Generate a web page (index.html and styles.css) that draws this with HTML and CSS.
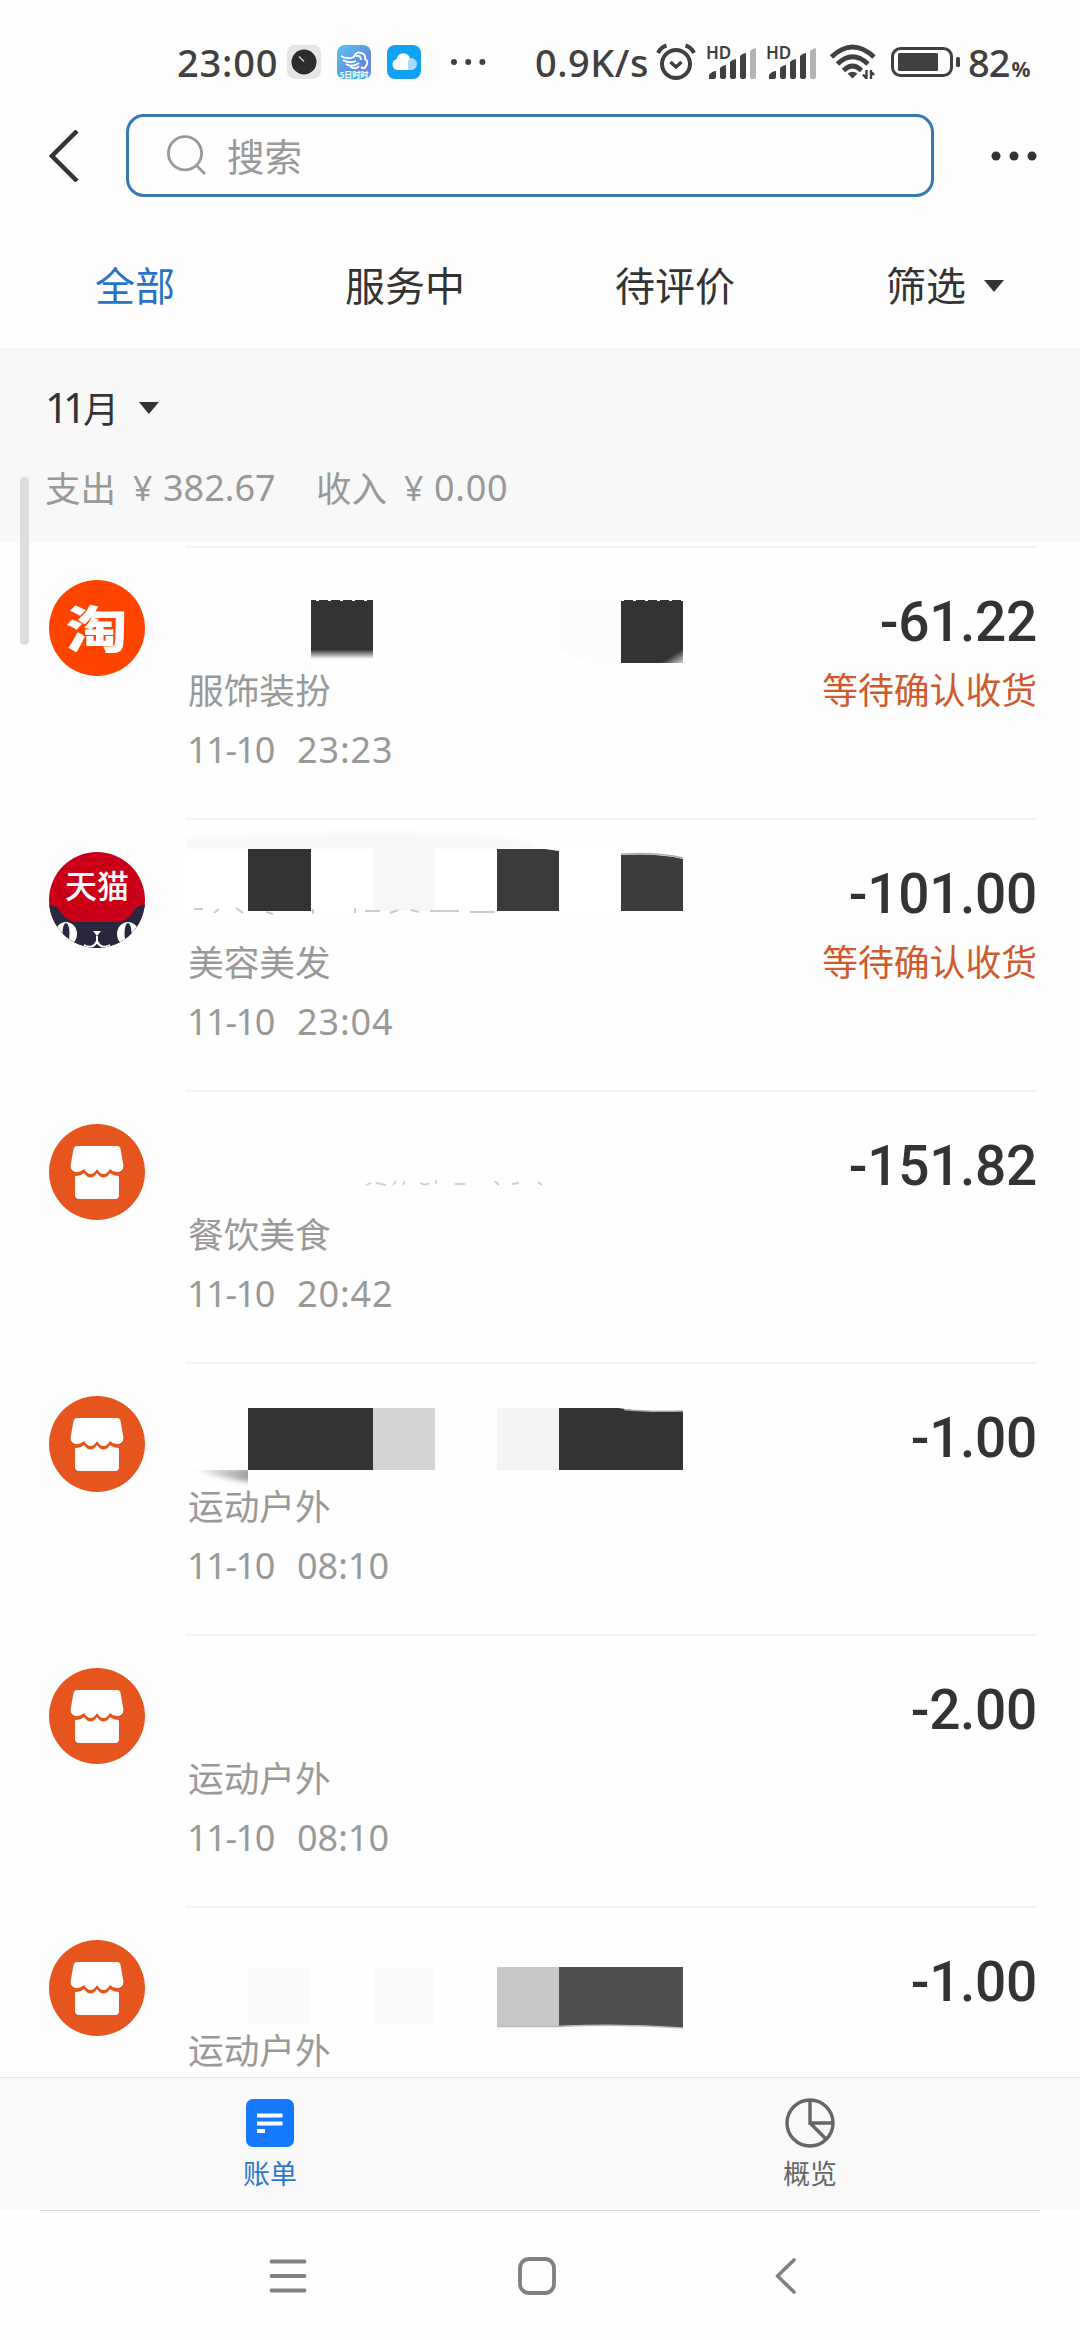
FILE: index.html
```html
<!DOCTYPE html>
<html lang="zh-CN">
<head>
<meta charset="utf-8">
<title>账单</title>
<link rel="stylesheet" href="styles.css">
</head>
<body>
<svg class="defs" width="0" height="0">
  <defs>
    <filter id="soft" x="-20%" y="-50%" width="140%" height="200%"><feGaussianBlur stdDeviation="2.5"/></filter>
    <symbol id="shop" viewBox="0 0 96 96">
      <circle cx="48" cy="48" r="48" fill="#e6551e"/>
      <path fill="#fff" d="M28 22H68Q71 22 71.500 25L74.500 42Q74 48 67.500 48Q64 48 61 45Q58 50 54.500 50Q51 50 48 45Q45 50 41.500 50Q38 50 35 45Q32 48 28.500 48Q22 48 21.500 42L24.500 25Q25 22 28 22Z"/>
      <path fill="#fff" d="M26 52Q32 52 35 49Q38 53.500 41.500 53.500Q45 53.500 48 49Q51 53.500 54.500 53.500Q58 53.500 61 49Q64 52 70 52V71Q70 75 66 75H30Q26 75 26 71Z"/>
    </symbol>
    <symbol id="bars" viewBox="0 0 52 36">
      <path fill="#404040" d="M2 35V31Q5 27 9 27V33Q9 35 7 35ZM13 33V24Q15 21.500 19 21V33Q19 35 17 35H15Q13 35 13 33ZM23 33V18Q25 15.500 29 15V33Q29 35 27 35H25Q23 35 23 33ZM33 33V12Q35 9.500 39 9V33Q39 35 37 35H35Q33 35 33 33Z"/>
      <path fill="#b4b4b4" d="M43 33V7Q45 4.500 49 4V33Q49 35 47 35H45Q43 35 43 33Z"/>
      <text x="-1" y="14.500" class="hd">HD</text>
    </symbol>
  </defs>
</svg>
<div class="screen">
  <header class="status">
    <span class="clock">23:00</span>
    <svg class="app-icon app-first" viewBox="0 0 34 34"><rect width="34" height="34" rx="8" fill="#e6e6e6"/><circle cx="17" cy="17" r="12.500" fill="#2c2c2c"/><path d="M12 11.500l5 5" stroke="#ddd" stroke-width="1.300"/></svg>
    <svg class="app-icon" viewBox="0 0 34 34">
      <defs><linearGradient id="g" x1="0" y1="0" x2="1" y2="1"><stop offset="0" stop-color="#56c6ee"/><stop offset=".6" stop-color="#5f91e2"/><stop offset="1" stop-color="#8a71dc"/></linearGradient></defs>
      <rect width="34" height="34" rx="8" fill="url(#g)"/>
      <path d="M0 26.500H34Q34 34 26 34H8Q0 34 0 26.500Z" fill="#4eaee8"/>
      <path d="M4 11Q10 15 17 12Q19 6 24 8Q29 9 28 14Q32 16 29 21Q27 25 24 22M6 15Q12 19 19 16M9 19Q15 23 22 18M13 22Q19 25 22 21M19 11Q24 10 24 15" fill="none" stroke="#fff" stroke-width="1.900"/>
      <text x="17" y="32.500" class="app-word">5日时时</text>
    </svg>
    <svg class="app-icon" viewBox="0 0 34 34"><rect width="34" height="34" rx="8" fill="#12a2f3"/><rect x="14" y="13" width="16" height="12" rx="6" fill="#a9dcfa"/><path d="M10 25A5.500 5.500 0 0 1 9.500 14.300A7 7 0 0 1 22 11Q23.500 14 21 16V25Z" fill="#fff"/></svg>
    <svg class="dots" viewBox="0 0 36 8" fill="#404040"><circle cx="4" cy="4" r="3"/><circle cx="18.200" cy="4" r="3"/><circle cx="32.400" cy="4" r="3"/></svg>
    <span class="rate">0.9K/s</span>
    <svg class="alarm" viewBox="0 0 40 38" fill="none" stroke="#404040" stroke-width="4"><circle cx="20" cy="21" r="14"/><path d="M2 10Q5 4 10.500 2.500M38 10Q35 4 29.500 2.500"/><path d="M14.500 19L20 24L25.500 19" stroke-width="3.500"/></svg>
    <svg class="signal"><use href="#bars"/></svg>
    <svg class="signal second"><use href="#bars"/></svg>
    <svg class="wifi" viewBox="0 0 46 36" fill="none" stroke="#404040" stroke-width="4.800"><path d="M1.500 13Q22.500 -7 44 13M7.500 20Q22.500 5.500 38 20M13.500 26.500Q22.500 17.500 31.500 26.500"/><path d="M17.500 29.500Q22.500 26 27.500 29.500L22.500 34.500Z" fill="#404040" stroke="none"/><path d="M36.500 26V35M33 30.500L36 34M41 35V26M44 31L41 27.500" stroke-width="2.400"/></svg>
    <svg class="battery" viewBox="0 0 70 30"><rect x="1.500" y="1.500" width="59" height="27" rx="8" fill="none" stroke="#404040" stroke-width="3"/><rect x="7" y="6" width="40" height="18" rx="1.500" fill="#404040"/><rect x="65" y="10" width="4" height="10" rx="1.500" fill="#404040"/></svg>
    <span class="level">82<small>%</small></span>
  </header>

  <div class="search-bar">
    <svg class="back" viewBox="0 0 30 52"><path d="M28 1L3 26L28 51" fill="none" stroke="#333" stroke-width="4.500"/></svg>
    <div class="search">
      <svg viewBox="0 0 40 42" fill="none" stroke="#999" stroke-width="2.800"><circle cx="18" cy="18.300" r="16.600"/><path d="M30 31L38 39"/></svg>
      <span>搜索</span>
    </div>
    <svg class="more" viewBox="0 0 46 10" fill="#333"><circle cx="5" cy="5" r="4.500"/><circle cx="23" cy="5" r="4.500"/><circle cx="41" cy="5" r="4.500"/></svg>
  </div>

  <nav class="tabs">
    <span class="active">全部</span>
    <span>服务中</span>
    <span>待评价</span>
    <span>筛选<i class="caret"></i></span>
  </nav>

  <section class="summary">
    <div class="month"><span class="month-number">11</span>月<i class="caret"></i></div>
    <div class="totals"><span class="label">支出</span><span class="yen">¥</span><span class="sum">382.67</span><span class="label">收入</span><span class="yen">¥</span><span class="income">0.00</span></div>
    <div class="scroll-thumb"></div>
  </section>

  <main class="list">
    <article class="row">
      <svg class="avatar" viewBox="0 0 96 96"><circle cx="48" cy="48" r="48" fill="#ff4400"/><text transform="translate(47.500 68) scale(1.1 .9)" class="tao">淘</text></svg>
      <div class="detail">
        <svg class="title" viewBox="186 0 500 124"><path d="M186 54H311V106H186Z" fill="#fdfdfd"/><path d="M559 54H621V117H590L559 104Z" fill="#fcfcfc"/><linearGradient id="fade" x1="0" y1="0" x2="0" y2="1"><stop offset=".84" stop-color="#333"/><stop offset="1" stop-color="#333" stop-opacity="0"/></linearGradient><linearGradient id="corner" gradientUnits="userSpaceOnUse" x1="675" y1="106" x2="682" y2="117"><stop offset=".1" stop-color="#333"/><stop offset="1" stop-color="#ccc"/></linearGradient><path d="M311 54H373V113H311Z" fill="url(#fade)"/><path d="M621 54H683V117H621Z" fill="url(#corner)"/><path d="M316 54.500H373M621 54.500H683" stroke="#fff" stroke-dasharray="3 9"/></svg>
        <div class="category">服饰装扮</div>
        <div class="time"><span class="day">11-10</span><span>23:23</span></div>
      </div>
      <div class="money"><div class="amount">-61.22</div><div class="state">等待确认收货</div></div>
    </article>

    <article class="row">
      <svg class="avatar" viewBox="0 0 96 96">
        <clipPath id="disc"><circle cx="48" cy="48" r="48"/></clipPath>
        <g clip-path="url(#disc)"><rect width="96" height="96" fill="#ca0018"/><path d="M0 53Q9 53 13 62Q20 70 28 70H68Q76 70 83 62Q87 53 96 53V96H0Z" fill="#29273d"/><ellipse cx="17" cy="82" rx="11" ry="12" fill="#fff"/><ellipse cx="79" cy="82" rx="11" ry="12" fill="#fff"/><ellipse cx="17" cy="81" rx="3.500" ry="10" fill="#29273d"/><ellipse cx="79" cy="81" rx="3.500" ry="10" fill="#29273d"/><path d="M44 79H52L48 84Z" fill="#fff"/><path d="M48 84V90M35 93Q44 98 48 89Q52 98 61 93" fill="none" stroke="#fff" stroke-width="2"/></g>
        <text x="48" y="45.500" class="tmall">天猫</text>
      </svg>
      <div class="detail">
        <svg class="title" viewBox="186 0 500 124"><path d="M186 31V21Q360 10 450 16Q520 18 540 31Z" fill="#f7f7f7" filter="url(#soft)"/><path d="M186 31H683V93H186Z" fill="#fff"/><path d="M248 31H311V93H248Z" fill="#333"/><path d="M373 31H435V93H373Z" fill="#f7f7f7"/><path d="M497 31H545L559 33V93H497ZM621 37Q659 35 683 41V93H621Z" fill="#3c3c3c"/><path d="M621 36Q659 34 683 40" fill="none" stroke="#aaa" stroke-width="1.500"/><path d="M194 91h9M214 95l5-4M236 90l7 5M266 94l7 2M313 91v5M355 95v-5M365 93h15M390 95l8-3M411 92l8 2M430 93h29M470 94h25" stroke="#ccc" stroke-width="2" fill="none"/></svg>
        <div class="category">美容美发</div>
        <div class="time"><span class="day">11-10</span><span>23:04</span></div>
      </div>
      <div class="money"><div class="amount">-101.00</div><div class="state">等待确认收货</div></div>
    </article>

    <article class="row">
      <svg class="avatar"><use href="#shop"/></svg>
      <div class="detail">
        <svg class="title" viewBox="186 0 500 124"><path d="M366 95l5-2M376 93l10 2M393 95l3-4M405 91l-2 4M420 93q6 3 9 0M436 94v-4M455 94h10M495 91l4 4M512 94l7-1M538 92l4 3" fill="none" stroke="#d0d0d0" stroke-width="1.800"/></svg>
        <div class="category">餐饮美食</div>
        <div class="time"><span class="day">11-10</span><span>20:42</span></div>
      </div>
      <div class="money"><div class="amount">-151.82</div></div>
    </article>

    <article class="row">
      <svg class="avatar"><use href="#shop"/></svg>
      <div class="detail">
        <svg class="title" viewBox="186 0 500 124"><linearGradient id="shade" x1="0" y1="0" x2="1" y2="0"><stop offset="0" stop-color="#fff"/><stop offset="1" stop-color="#999"/></linearGradient><clipPath id="under"><path d="M186 108H248V124H186Z"/></clipPath><g clip-path="url(#under)"><path d="M190 106H252V120Q220 117 190 106Z" fill="url(#shade)" filter="url(#soft)"/></g><path d="M248 46H373V108H248ZM559 46H618L640 49H683V108H559Z" fill="#333"/><path d="M373 46H435V108H373Z" fill="#d3d3d3"/><path d="M497 46H559V108H497Z" fill="#f3f3f3"/><path d="M624 47.500Q645 50 683 49" fill="none" stroke="#aaa" stroke-width="1.500"/></svg>
        <div class="category">运动户外</div>
        <div class="time"><span class="day">11-10</span><span class="early">08:10</span></div>
      </div>
      <div class="money"><div class="amount">-1.00</div></div>
    </article>

    <article class="row">
      <svg class="avatar"><use href="#shop"/></svg>
      <div class="detail">
        <svg class="title" viewBox="186 0 500 124"></svg>
        <div class="category">运动户外</div>
        <div class="time"><span class="day">11-10</span><span class="early">08:10</span></div>
      </div>
      <div class="money"><div class="amount">-2.00</div></div>
    </article>

    <article class="row">
      <svg class="avatar"><use href="#shop"/></svg>
      <div class="detail">
        <svg class="title" viewBox="186 0 500 124"><path d="M248 61H311V119H248ZM373 61H435V119H373Z" fill="#fafafa"/><path d="M497 61H559V120H497Z" fill="#c8c8c8"/><path d="M559 61H683V122Q620 117 559 120Z" fill="#505050"/><path d="M497 120.500H559Q620 117.500 683 122" fill="none" stroke="#bbb" stroke-width="1.500"/></svg>
        <div class="category">运动户外</div>
      </div>
      <div class="money"><div class="amount">-1.00</div></div>
    </article>
  </main>

  <footer class="tabbar">
    <div class="tab selected">
      <svg viewBox="0 0 50 50"><rect x="1" y="1" width="48" height="48" rx="7" fill="#1677ff"/><path d="M12 17.500H37.500M12 25.500H37.500M12 33H20" stroke="#fff" stroke-width="4"/></svg>
      <span>账单</span>
    </div>
    <div class="tab">
      <svg viewBox="0 0 50 50" fill="none" stroke="#666" stroke-width="3.400"><circle cx="25" cy="25" r="23"/><path d="M25 2V25H48M25 25L41 41"/></svg>
      <span>概览</span>
    </div>
  </footer>
  <div class="nav-divider"></div>

  <div class="system-nav">
    <svg viewBox="0 0 40 40" fill="none" stroke="#808080" stroke-width="3.800" stroke-linecap="round"><path d="M3.500 5.500H36.500M3.500 20H36.500M3.500 34.500H36.500"/></svg>
    <svg viewBox="0 0 40 40" fill="none" stroke="#808080" stroke-width="3.800"><rect x="3" y="3" width="34" height="34" rx="9"/></svg>
    <svg viewBox="0 0 40 40" fill="none" stroke="#808080" stroke-width="3.600" stroke-linecap="round" stroke-linejoin="round"><path d="M28 4L11.500 20L28 36"/></svg>
  </div>
</div>
</body>
</html>
```
FILE: styles.css
```css
* { box-sizing: border-box; }
body {
  margin: 0;
  background: #fefefe;
  color: #333;
  font-family: "Noto Sans", "Noto Sans CJK SC", sans-serif;
}
svg { display: block; flex: none; }
.defs { position: absolute; }
.screen {
  width: 1080px;
  height: 2340px;
  display: flex;
  flex-direction: column;
  overflow: hidden;
}

.status {
  height: 114px;
  padding: 10px 0 0 177px;
  display: flex;
  align-items: center;
  flex: none;
  color: #404040;
  font-size: 38px;
  font-weight: 500;
  white-space: nowrap;
}
.clock { width: 110px; letter-spacing: .8px; }
.app-icon { width: 34px; height: 34px; margin-right: 16px; }
.app-word { font: 700 8px "Noto Sans CJK SC", sans-serif; fill: #fff; text-anchor: middle; }
.dots { width: 36px; height: 8px; margin: 0 49px 0 13px; }
.rate { width: 121px; letter-spacing: .5px; }
.alarm { width: 40px; height: 38px; }
.signal { width: 52px; height: 36px; margin-left: 11px; overflow: visible; }
.second { margin-left: 8px; }
.hd { font: 600 17px "Noto Sans", sans-serif; fill: #404040; }
.wifi { width: 46px; height: 36px; margin-left: 11px; }
.battery { width: 70px; height: 30px; margin: 0 7px 0 15px; }
.level { letter-spacing: -1px; }
.level small { font-size: 21px; font-weight: 700; margin-left: 2px; }

.search-bar {
  height: 83px;
  display: flex;
  align-items: center;
  flex: none;
  padding-left: 49px;
}
.back { width: 30px; height: 52px; margin-right: 47px; }
.search {
  width: 808px;
  height: 83px;
  display: flex;
  align-items: center;
  border: 3px solid #3679b8;
  border-radius: 18px;
  padding-left: 38px;
  color: #999;
  font-size: 37.500px;
}
.search svg { width: 40px; height: 42px; margin-right: 20px; }
.search span { padding-bottom: 2px; }
.more { width: 46px; height: 10px; margin-left: 57px; }

.tabs {
  height: 151px;
  display: grid;
  grid-template-columns: repeat(4, 1fr);
  flex: none;
  padding-top: 60px;
  line-height: 58px;
  font-size: 40px;
  text-align: center;
}
.tabs .active { color: #2a72c8; }
.caret {
  display: inline-block;
  width: 20px;
  height: 12px;
  margin-left: 18px;
  background: #333;
  clip-path: polygon(0 0, 100% 0, 50% 100%);
  vertical-align: 9px;
}

.summary {
  position: relative;
  height: 198px;
  flex: none;
  padding: 28px 0 0 45px;
  background: #f8f8f8;
  border-top: 2px solid #f4f4f4;
  border-bottom: 3px solid #fefefe;
}
.month { height: 58px; line-height: 58px; font-size: 36px; }
.month-number { font-size: 41px; letter-spacing: -5.500px; margin-right: 2px; }
.month .caret { margin-left: 20px; }
.totals {
  display: flex;
  height: 50px;
  margin-top: 27px;
  line-height: 50px;
  color: #999;
  font-size: 36px;
}
.label { width: 88px; font-size: 35.500px; }
.yen { width: 30px; font-size: 34px; }
.sum { width: 153px; }
.income { letter-spacing: .7px; }
.scroll-thumb {
  position: absolute;
  left: 20px;
  top: 127px;
  width: 9px;
  height: 168px;
  border-radius: 5px;
  background: #dedede;
  z-index: 1;
}

.list { height: 1531px; overflow: hidden; flex: none; }
.row {
  height: 272px;
  display: flex;
  align-items: flex-start;
  padding-left: 49px;
}
.avatar { width: 96px; height: 96px; margin: 34px 41px 0 0; }
.tao { font: 900 56px "Noto Sans CJK SC", sans-serif; fill: #fff; text-anchor: middle; }
.tmall { font: 500 32px "Noto Sans CJK SC", sans-serif; fill: #fff; text-anchor: middle; }
.detail { width: 500px; height: 272px; border-top: 2px solid #f3f3f3; }
.title { width: 500px; height: 124px; margin-top: -2px; }
.category {
  height: 41px;
  padding-left: 2px;
  color: #999;
  font-size: 35.700px;
  line-height: 41px;
}
.time {
  display: flex;
  height: 40px;
  margin-top: 19px;
  padding-left: 1px;
  color: #999;
  font-size: 36px;
  line-height: 40px;
  letter-spacing: .9px;
}
.day { width: 110px; letter-spacing: -1.400px; }
.early { letter-spacing: 0; }
.money {
  width: 351px;
  height: 272px;
  padding: 39px 0 0;
  border-top: 2px solid #f3f3f3;
  text-align: right;
}
.amount {
  height: 70px;
  font: 500 55px/70px Roboto, sans-serif;
  letter-spacing: -.3px;
}
.state {
  height: 41px;
  margin-top: 13px;
  color: #cf5a2b;
  font-size: 35.800px;
  line-height: 41px;
}

.tabbar {
  height: 133px;
  display: grid;
  grid-template-columns: 1fr 1fr;
  flex: none;
  padding-top: 20px;
  background: #f9f9f9;
  border-top: 1px solid #e6e6e6;
}
.tab {
  display: flex;
  flex-direction: column;
  align-items: center;
  color: #666;
  font-size: 27px;
  line-height: 36px;
}
.tab svg { width: 50px; height: 50px; margin-bottom: 8px; }
.selected { color: #2a78d0; }
.nav-divider { height: 1px; margin: 0 40px; background: #dcdcdc; flex: none; }
.system-nav {
  display: flex;
  gap: 209px;
  padding: 45px 0 0 268px;
}
.system-nav svg { width: 40px; height: 40px; }
```
